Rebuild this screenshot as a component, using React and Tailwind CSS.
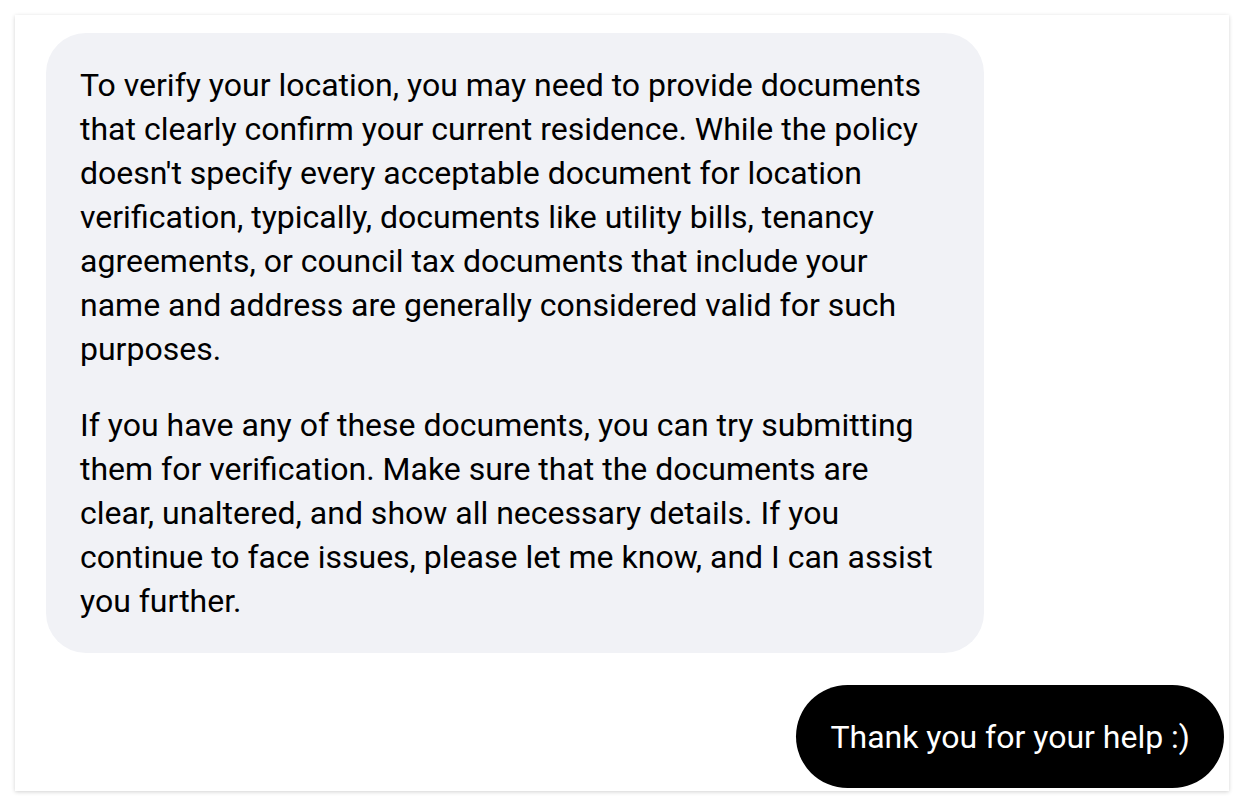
export default function App() {
  return (
    <div className="min-h-screen bg-white p-[15px] font-['Roboto',sans-serif]">
      <div className="flex h-[776px] w-[1214px] flex-col gap-[32px] bg-white pb-[2px] pl-[31px] pr-[5px] pt-[18px] shadow-[0_1px_4px_rgba(0,0,0,0.18)]">
        {/* assistant message */}
        <div className="w-[938px] rounded-[40px] bg-[#f1f2f6] px-[34px] pb-[30px] pt-[30px] text-[32px] leading-[44px] text-black">
          <p>
            To verify your location, you may need to provide documents that clearly confirm your current residence. While the policy doesn't specify every acceptable document for location verification, typically, documents like utility bills, tenancy agreements, or council tax documents that include your name and address are generally considered valid for such purposes.
          </p>
          <p className="mt-[32px]">
            If you have any of these documents, you can try submitting them for verification. Make sure that the documents are clear, unaltered, and show all necessary details. If you continue to face issues, please let me know, and I can assist you further.
          </p>
        </div>

        {/* user message */}
        <div className="self-end rounded-full bg-black px-[34px] py-[29.5px] text-[32px] leading-[44px] text-white">
          Thank you for your help :)
        </div>
      </div>
    </div>
  )
}
